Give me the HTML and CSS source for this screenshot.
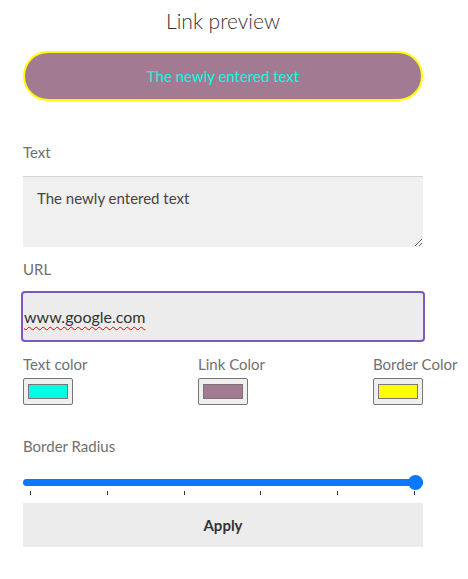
FILE: index.html
```html
<!DOCTYPE html>
<html>
<head>
<meta charset="utf-8">
<link rel="stylesheet" href="styles.css">
</head>
<body>
<div class="page">
  <h1 class="title">Link preview</h1>
  <a class="preview" href="#">The newly entered text</a>

  <label class="label label-text">Text</label>
  <textarea class="textarea">The newly entered text</textarea>

  <label class="label label-url">URL</label>
  <div class="url-input"><span class="url-text">www.google.com</span></div>

  <div class="colors">
    <div class="color-field">
      <span class="label">Text color</span>
      <input class="color" type="color" value="#00ffe1">
    </div>
    <div class="color-field">
      <span class="label">Link Color</span>
      <input class="color" type="color" value="#a27b93">
    </div>
    <div class="color-field last">
      <span class="label">Border Color</span>
      <input class="color" type="color" value="#ffff00">
    </div>
  </div>

  <label class="label label-radius">Border Radius</label>
  <input class="range" type="range" min="0" max="5" value="5">
  <div class="ticks">
    <span class="tick"></span><span class="tick"></span><span class="tick"></span>
    <span class="tick"></span><span class="tick"></span><span class="tick"></span>
  </div>

  <button class="apply">Apply</button>
</div>
</body>
</html>
```

FILE: styles.css
```css
* { box-sizing: border-box; }
html, body { margin: 0; padding: 0; background: #fff; }
body {
  font-family: "Lato", "Open Sans", sans-serif;
  color: #333;
  overflow: hidden;
}
.page {
  width: 400px;
  margin-left: 23px;
  display: flex;
  flex-direction: column;
  align-items: flex-start;
}
.title {
  align-self: stretch;
  text-align: center;
  font-weight: 300;
  font-size: 21px;
  line-height: 26px;
  margin: 8px 0 17px;
  color: #333;
}
.preview {
  width: 400px;
  height: 50px;
  border: 2px solid #ffff00;
  border-radius: 25px;
  background: #a27b93;
  color: #00ffe1;
  text-decoration: none;
  font-size: 15px;
  display: flex;
  align-items: center;
  justify-content: center;
}
.label {
  font-size: 15px;
  color: #707070;
  line-height: 20px;
}
.label-text { margin-top: 41px; }
.textarea {
  margin-top: 14px;
  width: 400px;
  height: 71px;
  background: #f0f0f0;
  border: none;
  border-top: 1px solid #d4d4d4;
  border-radius: 0;
  padding: 12px 14px;
  font-family: inherit;
  font-size: 15px;
  color: #444;
  resize: vertical;
}
.label-url { margin-top: 12px; }
.url-input {
  margin-top: 12px;
  margin-left: -2px;
  width: 404px;
  height: 51px;
  background: #ececec;
  border: 2px solid #7e57c2;
  border-radius: 4px;
  display: flex;
  align-items: center;
  padding-left: 1px;
}
.url-text {
  font-size: 16px;
  color: #333;
  text-decoration: underline wavy #e00;
  text-decoration-thickness: 1px;
  text-underline-offset: 3px;
}
.colors {
  margin-top: 12px;
  width: 400px;
  display: flex;
}
.color-field {
  flex: none;
  width: 175px;
  display: flex;
  flex-direction: column;
  align-items: flex-start;
  gap: 4px;
}
.color-field.last { width: auto; }
.color-field .label { white-space: nowrap; }
.color {
  width: 50px;
  height: 27px;
  margin: 0;
  padding: 1px 2px;
  border: 1px solid #767676;
  border-radius: 2px;
  background: #efefef;
}
.label-radius { margin-top: 31px; }
.range {
  -webkit-appearance: none;
  appearance: none;
  width: 400px;
  height: 15px;
  margin: 19px 0 0;
  background: transparent;
}
.range::-webkit-slider-runnable-track {
  height: 7px;
  border-radius: 4px;
  background: #0a78ff;
}
.range::-webkit-slider-thumb {
  -webkit-appearance: none;
  width: 15px;
  height: 15px;
  border-radius: 50%;
  background: #0a78ff;
  margin-top: -4px;
}
.ticks {
  width: 400px;
  display: flex;
  justify-content: space-between;
  padding: 0 8px 0 7px;
  margin-top: 1px;
}
.tick {
  width: 1px;
  height: 4px;
  background: #333;
}
.apply {
  margin-top: 8px;
  width: 400px;
  height: 44px;
  border: none;
  background: #ececec;
  font-family: inherit;
  font-weight: 700;
  font-size: 15px;
  color: #333;
}
```
